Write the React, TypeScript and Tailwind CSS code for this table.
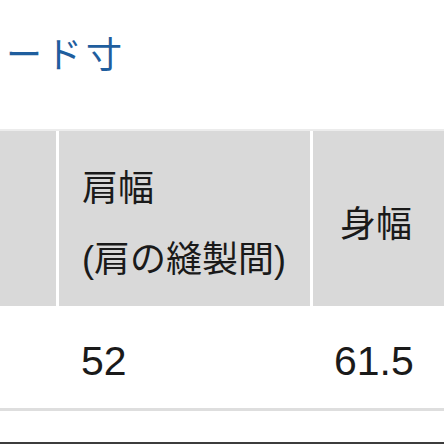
export default function App() {
  return (
    <div className="w-[444px] h-[444px] overflow-hidden bg-white flex flex-col font-['Liberation_Sans','Noto_Sans_CJK_JP',sans-serif] text-[#1a1a1a]">
      <div className="h-[129px] pt-[36px] overflow-hidden whitespace-nowrap">
        <div className="ml-[-34px] text-[36px] leading-[40px] tracking-[4px] text-[#1f5e9e]">ヌード寸</div>
      </div>
      <div className="h-[2px] bg-[#ececec]"></div>
      <div className="flex h-[175px] gap-x-[3px] bg-white">
        <div className="w-[56px] shrink-0 bg-[#d9d9d9]"></div>
        <div className="w-[251px] shrink-0 bg-[#d9d9d9] flex items-center pt-[11px] pl-[23px] text-[36px] leading-[71px] whitespace-nowrap">
          <div>
            肩幅
            <br />
            (肩の縫製間)
          </div>
        </div>
        <div className="w-[160px] shrink-0 bg-[#d9d9d9] flex items-center pt-[11px] pl-[27px] text-[36px] leading-[71px] whitespace-nowrap">
          身幅
        </div>
      </div>
      <div className="flex h-[102px] gap-x-[3px]">
        <div className="w-[56px] shrink-0"></div>
        <div className="w-[251px] shrink-0 flex items-center pt-[8px] pl-[22px] text-[41px] leading-[40px]">52</div>
        <div className="w-[160px] shrink-0 flex items-center pt-[8px] pl-[21px] text-[41px] leading-[40px]">61.5</div>
      </div>
      <div className="h-[3px] bg-[#dedede]"></div>
      <div className="h-[31px]"></div>
      <div className="h-[2px] bg-[#3c3c3c]"></div>
    </div>
  );
}
